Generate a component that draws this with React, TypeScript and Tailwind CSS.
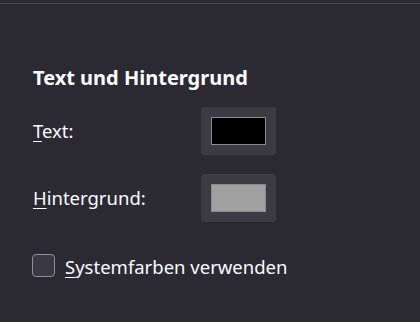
export default function App() {
  return (
    <div
      className="w-[420px] h-[322px] bg-[#2b2a33] text-[#fbfbfe] overflow-hidden"
      style={{ fontFamily: '"Noto Sans", "Open Sans", sans-serif' }}
    >
      <div className="h-[3px]" />
      <div className="h-px bg-[#4a4950]" />
      <div className="pl-[33px] pt-[60px]">
        <h2 className="text-[20px] font-bold leading-[28px]">Text und Hintergrund</h2>
        <div className="mt-[15px] flex items-center w-[243px] justify-between">
          <span className="text-[18.5px] leading-[24px]">
            <span className="underline underline-offset-[3px]">T</span>ext:
          </span>
          <button className="w-[75px] h-[48px] rounded-[4px] bg-[#3c3b43] flex items-center justify-center">
            <span className="block w-[55px] h-[28px] bg-black border border-[#8a8a8e]" />
          </button>
        </div>
        <div className="mt-[19px] flex items-center w-[243px] justify-between">
          <span className="text-[18.5px] leading-[24px]">
            <span className="underline underline-offset-[3px]">H</span>intergrund:
          </span>
          <button className="w-[75px] h-[48px] rounded-[4px] bg-[#3c3b43] flex items-center justify-center">
            <span className="block w-[55px] h-[28px] bg-[#a0a0a0] border border-[#8a8a8e]" />
          </button>
        </div>
        <div className="mt-[30px] -ml-px flex items-center gap-[10px]">
          <span className="block w-[23px] h-[23px] rounded-[4px] border border-[#8f8f9d] bg-[#3a3941]" />
          <span className="text-[18.5px] leading-[24px] pt-[3px]">
            <span className="underline underline-offset-[3px]">S</span>ystemfarben verwenden
          </span>
        </div>
      </div>
    </div>
  );
}
